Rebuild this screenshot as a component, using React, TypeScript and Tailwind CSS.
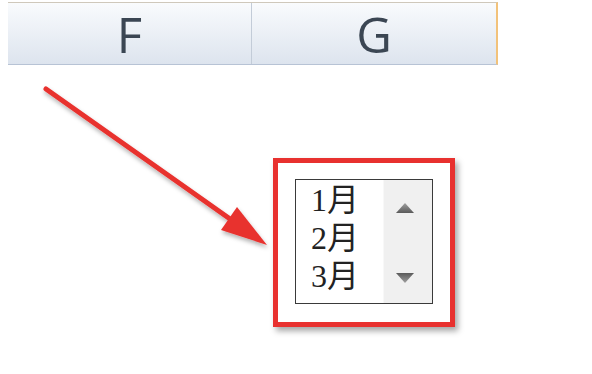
import React from "react";

const Triangle = ({ up }: { up?: boolean }) => (
  <svg width="18" height="10" viewBox="0 0 18 10">
    <defs>
      <linearGradient id={up ? "gu" : "gd"} x1="0" y1="0" x2="0" y2="1">
        <stop offset="0" stopColor={up ? "#a0a0a0" : "#5a5a5a"} />
        <stop offset="1" stopColor={up ? "#5a5a5a" : "#a0a0a0"} />
      </linearGradient>
    </defs>
    <polygon
      points={up ? "9,0 18,10 0,10" : "0,0 18,0 9,10"}
      fill={`url(#${up ? "gu" : "gd"})`}
    />
  </svg>
);

const Arrow = () => (
  <svg
    className="absolute left-0 top-0 pointer-events-none"
    width="592"
    height="374"
    viewBox="0 0 592 374"
  >
    <defs>
      <filter id="sh" x="-20%" y="-20%" width="140%" height="140%">
        <feDropShadow dx="1" dy="3" stdDeviation="2" floodColor="#000" floodOpacity="0.3" />
      </filter>
    </defs>
    <g filter="url(#sh)">
      <line x1="46" y1="89" x2="240" y2="226" stroke="#e8312f" strokeWidth="5" strokeLinecap="round" />
      <polygon points="267,245 221,230 237,207" fill="#e8312f" />
    </g>
  </svg>
);

export default function App() {
  return (
    <div className="relative w-[592px] h-[374px] bg-white overflow-hidden">
      {/* column header strip */}
      <div
        className="ml-2 mt-[2px] w-[490px] h-[63px] flex border-t border-t-[#cfc8bb] border-b border-b-[#b7c3d5] border-r-2 border-r-[#f2c27a] bg-gradient-to-b from-[#f9fbfd] to-[#dde4ee] text-[#3b4653]"
        style={{ fontFamily: '"Open Sans", "Liberation Sans", sans-serif' }}
      >
        <div className="w-[244px] flex items-center justify-center border-r border-r-[#c3ccd8] text-[49px] leading-none pt-[2px]">
          F
        </div>
        <div className="flex-1 flex items-center justify-center text-[49px] leading-none pt-[2px]">
          G
        </div>
      </div>

      {/* highlighted list box */}
      <div className="ml-[273px] mt-[93px] w-[182px] h-[169px] border-[5px] border-[#e8312f] shadow-[3px_4px_6px_rgba(0,0,0,0.35)] pl-[17px] pt-[16px]">
        <div className="w-[138px] h-[125px] border border-[#3a3a3a] flex bg-white">
          <div
            className="w-[87px] pl-[15px] pt-[1px] text-[32px] leading-[38px] text-[#222]"
            style={{ fontFamily: '"Liberation Serif", "Noto Sans CJK SC", serif' }}
          >
            <div>1月</div>
            <div>2月</div>
            <div>3月</div>
          </div>
          <div className="flex-1 bg-[#f0f0f0] border-l border-l-[#f8f8f8] flex flex-col items-center justify-between pt-[23px] pb-[20px] pr-[6px]">
            <Triangle up />
            <Triangle />
          </div>
        </div>
      </div>

      <Arrow />
    </div>
  );
}
